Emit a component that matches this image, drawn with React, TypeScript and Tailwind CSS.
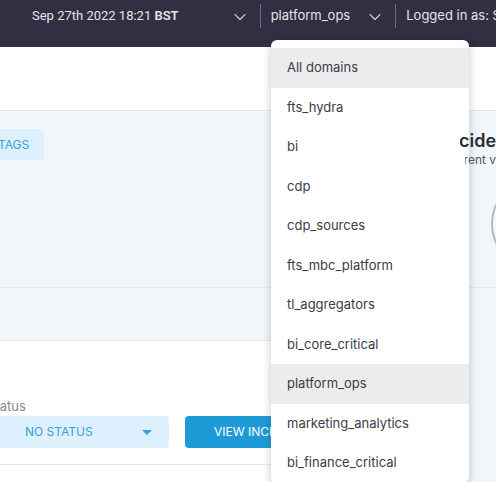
import { ChevronDown } from 'lucide-react';

const domains = [
  'All domains',
  'fts_hydra',
  'bi',
  'cdp',
  'cdp_sources',
  'fts_mbc_platform',
  'tl_aggregators',
  'bi_core_critical',
  'platform_ops',
  'marketing_analytics',
  'bi_finance_critical',
];

const highlighted = ['All domains', 'platform_ops'];

function DomainMenu() {
  return (
    <div className="absolute left-[271px] top-[40px] z-10 w-[198px] rounded-md bg-white pt-2 shadow-[0_2px_10px_rgba(0,0,0,0.22)]">
      {domains.map((d) => (
        <div
          key={d}
          className={`flex h-[39.5px] items-center px-4 text-[13px] text-[#3b3b48] ${
            highlighted.includes(d) ? 'bg-[#ececec]' : ''
          }`}
        >
          {d}
        </div>
      ))}
    </div>
  );
}

export default function App() {
  return (
    <div className="relative h-[482px] w-[496px] overflow-hidden bg-white font-['Inter',sans-serif]">
      {/* Top bar */}
      <header className="relative flex h-[47px] items-start whitespace-nowrap bg-[#332f42] pl-[32px] text-[13px] text-[#e4e3ea]">
        <div className="flex h-[32px] shrink-0 items-center">
          <span className="font-['Roboto',sans-serif]">
            Sep 27th 2022 18:21 <b className="font-semibold">BST</b>
          </span>
          <ChevronDown className="ml-[51px] mt-[2px] h-[20px] w-[20px] text-[#c9c8d2]" strokeWidth={1.4} />
        </div>
        <div className="ml-[10px] mt-[4px] h-[24px] w-px shrink-0 bg-[#6c6880]" />
        <div className="flex h-[32px] shrink-0 items-center pl-[10px]">
          <span>platform_ops</span>
          <ChevronDown className="ml-[15px] mt-[2px] h-[20px] w-[20px] text-[#c9c8d2]" strokeWidth={1.4} />
        </div>
        <div className="ml-[10px] mt-[4px] h-[24px] w-px shrink-0 bg-[#6c6880]" />
        <div className="flex h-[32px] shrink-0 items-center pl-[10px]">Logged in as: Sam</div>
        <DomainMenu />
      </header>

      <div className="h-[64px] border-b border-[#e3e7ec] bg-white" />

      <div className="flex">
        {/* Left column */}
        <div className="w-[437px] shrink-0">
          <div className="h-[177px] border-b border-[#e3e7ec] bg-[#f2f6fa] pt-[18px]">
            <button className="-ml-[17px] h-[31px] whitespace-nowrap rounded-[4px] bg-[#dcf1fd] px-[15px] text-[12px] text-[#3a9fd8]">
              TAGS
            </button>
          </div>
          <div className="h-[53px] border-b border-[#e3e7ec] bg-[#f2f6fa]" />
          <div className="border-b border-[#e3e7ec] bg-white pb-[16px] pt-[57px]">
            <div className="-ml-[13px] mb-[2px] text-[13px] leading-4 text-[#8a8a8a]">Status</div>
            <div className="flex items-center gap-4">
              <div className="-ml-[40px] flex h-[32px] w-[209px] shrink-0 items-center rounded-[4px] bg-[#dcf1fd] pl-[65px] pr-[17px] text-[12px] text-[#3a9fd8]">
                <span className="flex-1">NO STATUS</span>
                <span className="h-0 w-0 border-x-[5px] border-t-[5px] border-x-transparent border-t-[#3a9fd8]" />
              </div>
              <button className="h-[32px] w-[200px] shrink-0 whitespace-nowrap rounded-[4px] bg-[#1e9bd6] pl-[29px] text-left text-[12px] text-white">
                VIEW INCIDENTS
              </button>
            </div>
          </div>
        </div>

        {/* Right column */}
        <div className="h-[371px] flex-1 bg-[#f2f6fa]">
          <div className="h-[177px] border-b border-[#e3e7ec] pt-[19px]">
            <div className="relative z-20 ml-[23px] overflow-hidden whitespace-nowrap">
              <div className="-ml-[17px] text-[18px] font-semibold leading-[22px] text-[#2b2b36]">Incidents</div>
            </div>
            <div className="relative z-20 ml-[28px] overflow-hidden whitespace-nowrap">
              <div className="-ml-[22px] text-[12px] leading-4 text-[#555]">Current view</div>
            </div>
            <div className="ml-[54px] mt-[11px] h-[90px] w-[90px] rounded-full border-2 border-[#b3bcc6]" />
          </div>
        </div>
      </div>
    </div>
  );
}
